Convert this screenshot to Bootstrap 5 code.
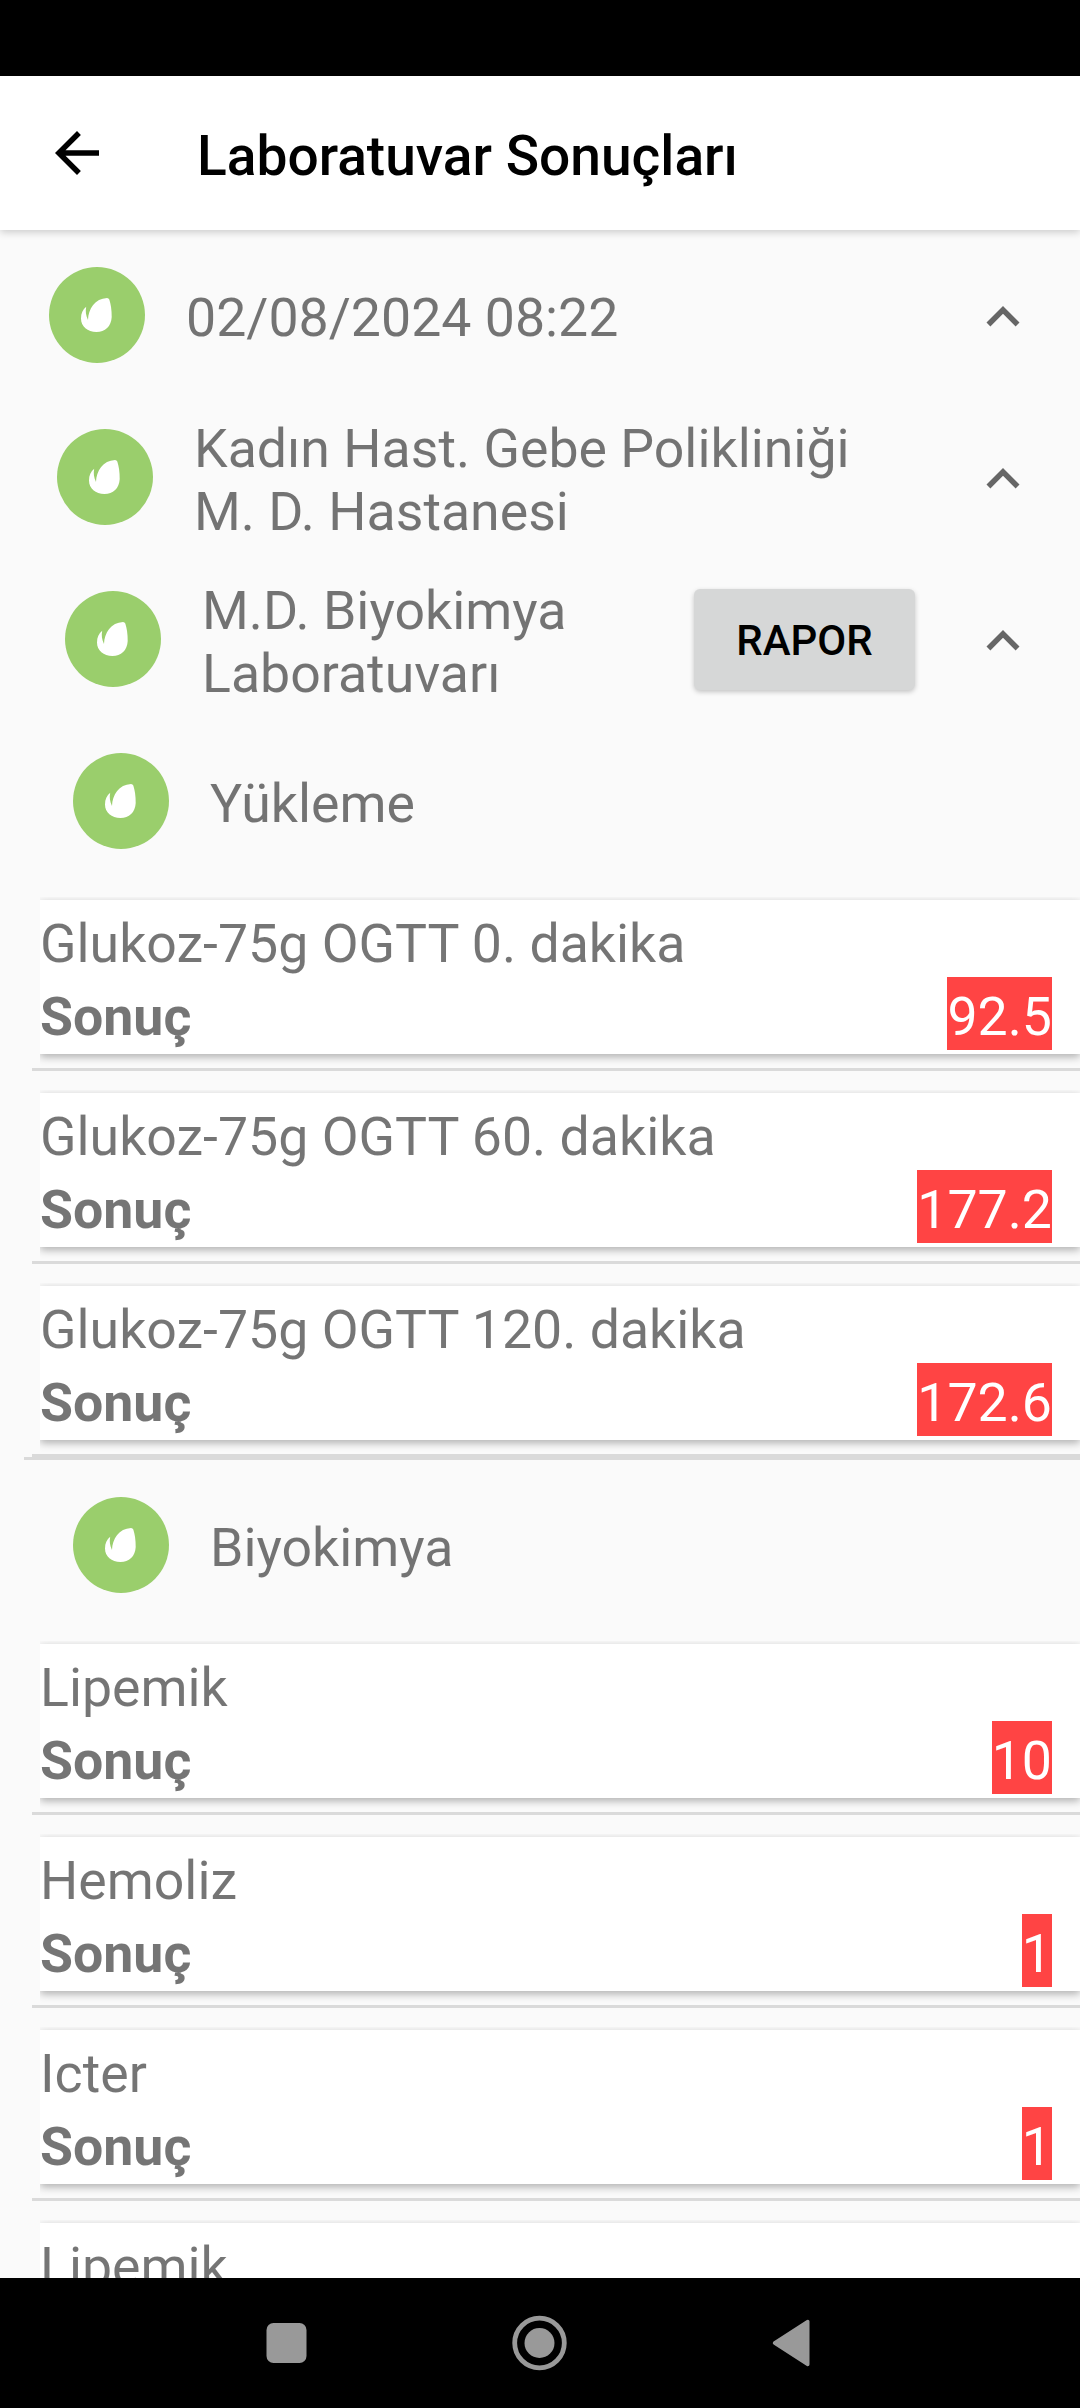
<!DOCTYPE html>
<html lang="tr">
<head>
<meta charset="utf-8">
<meta name="viewport" content="width=device-width, initial-scale=1">
<title>Laboratuvar Sonuçları</title>
<link rel="stylesheet" href="https://cdn.jsdelivr.net/npm/bootstrap@5.3.0/dist/css/bootstrap.min.css">
<style>
  body { font-family: Roboto, "Noto Sans", sans-serif; background: #fafafa; color: rgba(0,0,0,.54); font-size: 53.65px; line-height: 63px; }
  .screen { height: 2408px; }
  .status-strip { height: 76px; background: #000; }
  .app-bar { height: 154px; background: #fff; padding-left: 44px; box-shadow: 0 2px 8px rgba(0,0,0,.2); z-index: 2; }
  .app-bar h1 { font-size: 55.1px; line-height: 64px; color: #000; font-weight: 500; margin-left: 87px; padding-top: 6px; }
  .content-area { padding-top: 4px; min-height: 0; }
  .tree-row { height: 162px; padding-right: 44px; gap: 41px; }
  .level-1 { padding-left: 49px; }
  .level-2 { padding-left: 57px; }
  .level-3 { padding-left: 65px; }
  .level-4 { padding-left: 73px; }
  .tree-row .caption { padding-top: 6px; }
  .tree-row .caption.single { padding-top: 4px; }
  .tree-row .chevron { margin-top: 4px; }
  .btn-report { width: 221px; height: 101px; background: #d6d7d7; color: #000; font-size: 42px; font-weight: 500; line-height: 50px; border: 0; border-radius: 6px; padding: 3px 0 0; margin-right: 14px; box-shadow: 0 2px 5px rgba(0,0,0,.22); }
  .result-list { padding-top: 18px; }
  .result-card { height: 154px; margin-left: 40px; padding: 4px 28px 4px 0; background: #fff; box-shadow: 0 3px 8px rgba(0,0,0,.3); clip-path: inset(-3px 0 -13px 0); }
  .result-card .text-line { height: 73px; line-height: 67px; padding-top: 6px; }
  .result-card .flagged { background: #ff4444; color: #fff; }
  .split-line { height: 3px; background: #dadada; margin: 14px 0 22px 32px; }
  .split-line.last { margin-bottom: 0; }
  .group-line { height: 3px; background: #dadada; margin: 0 0 4px 24px; }
  .nav-strip { height: 130px; background: #000; z-index: 2; }
</style>
<script src="https://cdn.jsdelivr.net/npm/bootstrap@5.3.0/dist/js/bootstrap.bundle.min.js"></script>
</head>
<body>
<svg width="0" height="0" class="d-none">
  <symbol id="leaf" viewBox="0 0 96 96">
    <circle cx="48" cy="48" r="48" fill="#9ace6c"/>
    <path fill="#fff" d="M58 30.900Q59.700 30.900 60.300 32.500C61.800 37 62.800 43 62.700 50C62.300 59.500 56 65 47.500 65C38.500 65 32 59.500 32 51.500C32 46.500 33.800 42.300 37.200 39.800C36.300 44 36.800 48.500 39 53C39.300 41.500 46 31.500 58 30.900Z"/>
  </symbol>
  <symbol id="up" viewBox="0 0 24 24"><path fill="#666" d="M12 8l-6 6 1.410 1.410L12 10.830l4.590 4.580L18 14z"/></symbol>
</svg>
<div class="screen d-flex flex-column overflow-hidden">
  <div class="status-strip flex-shrink-0"></div>
  <header class="app-bar d-flex align-items-center flex-shrink-0 position-relative">
    <svg width="66" height="66" viewBox="0 0 24 24"><path d="M20 11H7.830l5.590-5.590L12 4l-8 8 8 8 1.410-1.410L7.830 13H20v-2z"/></svg>
    <h1 class="mb-0">Laboratuvar Sonuçları</h1>
  </header>

  <main class="content-area flex-grow-1 overflow-hidden">
    <div class="tree-row level-1 d-flex align-items-center">
      <svg class="flex-shrink-0" width="96" height="96"><use href="#leaf"/></svg>
      <div class="caption single flex-grow-1">02/08/2024 08:22</div>
      <svg class="chevron flex-shrink-0" width="66" height="66"><use href="#up"/></svg>
    </div>
    <div class="tree-row level-2 d-flex align-items-center">
      <svg class="flex-shrink-0" width="96" height="96"><use href="#leaf"/></svg>
      <div class="caption flex-grow-1">Kadın Hast. Gebe Polikliniği<br>M. D. Hastanesi</div>
      <svg class="chevron flex-shrink-0" width="66" height="66"><use href="#up"/></svg>
    </div>
    <div class="tree-row level-3 d-flex align-items-center">
      <svg class="flex-shrink-0" width="96" height="96"><use href="#leaf"/></svg>
      <div class="caption flex-grow-1">M.D. Biyokimya<br>Laboratuvarı</div>
      <button type="button" class="btn btn-report flex-shrink-0">RAPOR</button>
      <svg class="chevron flex-shrink-0" width="66" height="66"><use href="#up"/></svg>
    </div>

    <section>
      <div class="tree-row level-4 d-flex align-items-center">
        <svg class="flex-shrink-0" width="96" height="96"><use href="#leaf"/></svg>
        <div class="caption single">Yükleme</div>
      </div>
      <div class="result-list">
        <div class="result-card">
          <div class="text-line">Glukoz-75g OGTT 0. dakika</div>
          <div class="d-flex justify-content-between"><div class="text-line fw-bold">Sonuç</div><div class="text-line flagged">92.5</div></div>
        </div>
        <div class="split-line"></div>
        <div class="result-card">
          <div class="text-line">Glukoz-75g OGTT 60. dakika</div>
          <div class="d-flex justify-content-between"><div class="text-line fw-bold">Sonuç</div><div class="text-line flagged">177.2</div></div>
        </div>
        <div class="split-line"></div>
        <div class="result-card">
          <div class="text-line">Glukoz-75g OGTT 120. dakika</div>
          <div class="d-flex justify-content-between"><div class="text-line fw-bold">Sonuç</div><div class="text-line flagged">172.6</div></div>
        </div>
        <div class="split-line last"></div>
        <div class="group-line"></div>
      </div>
    </section>

    <section>
      <div class="tree-row level-4 d-flex align-items-center">
        <svg class="flex-shrink-0" width="96" height="96"><use href="#leaf"/></svg>
        <div class="caption single">Biyokimya</div>
      </div>
      <div class="result-list">
        <div class="result-card">
          <div class="text-line">Lipemik</div>
          <div class="d-flex justify-content-between"><div class="text-line fw-bold">Sonuç</div><div class="text-line flagged">10</div></div>
        </div>
        <div class="split-line"></div>
        <div class="result-card">
          <div class="text-line">Hemoliz</div>
          <div class="d-flex justify-content-between"><div class="text-line fw-bold">Sonuç</div><div class="text-line flagged">1</div></div>
        </div>
        <div class="split-line"></div>
        <div class="result-card">
          <div class="text-line">Icter</div>
          <div class="d-flex justify-content-between"><div class="text-line fw-bold">Sonuç</div><div class="text-line flagged">1</div></div>
        </div>
        <div class="split-line"></div>
        <div class="result-card">
          <div class="text-line">Lipemik</div>
        </div>
      </div>
    </section>
  </main>

  <nav class="nav-strip flex-shrink-0 position-relative">
    <svg class="d-block" width="1080" height="130" viewBox="0 0 1080 130" fill="#999">
      <rect x="266.500" y="45" width="40" height="40" rx="7"/>
      <circle cx="539.500" cy="65" r="24.800" fill="none" stroke="#999" stroke-width="4.800"/>
      <circle cx="539.500" cy="65" r="15"/>
      <path d="M774.500 65L807.800 43.500V86.500Z" stroke="#999" stroke-width="3.400" stroke-linejoin="round"/>
    </svg>
  </nav>
</div>
</body>
</html>
